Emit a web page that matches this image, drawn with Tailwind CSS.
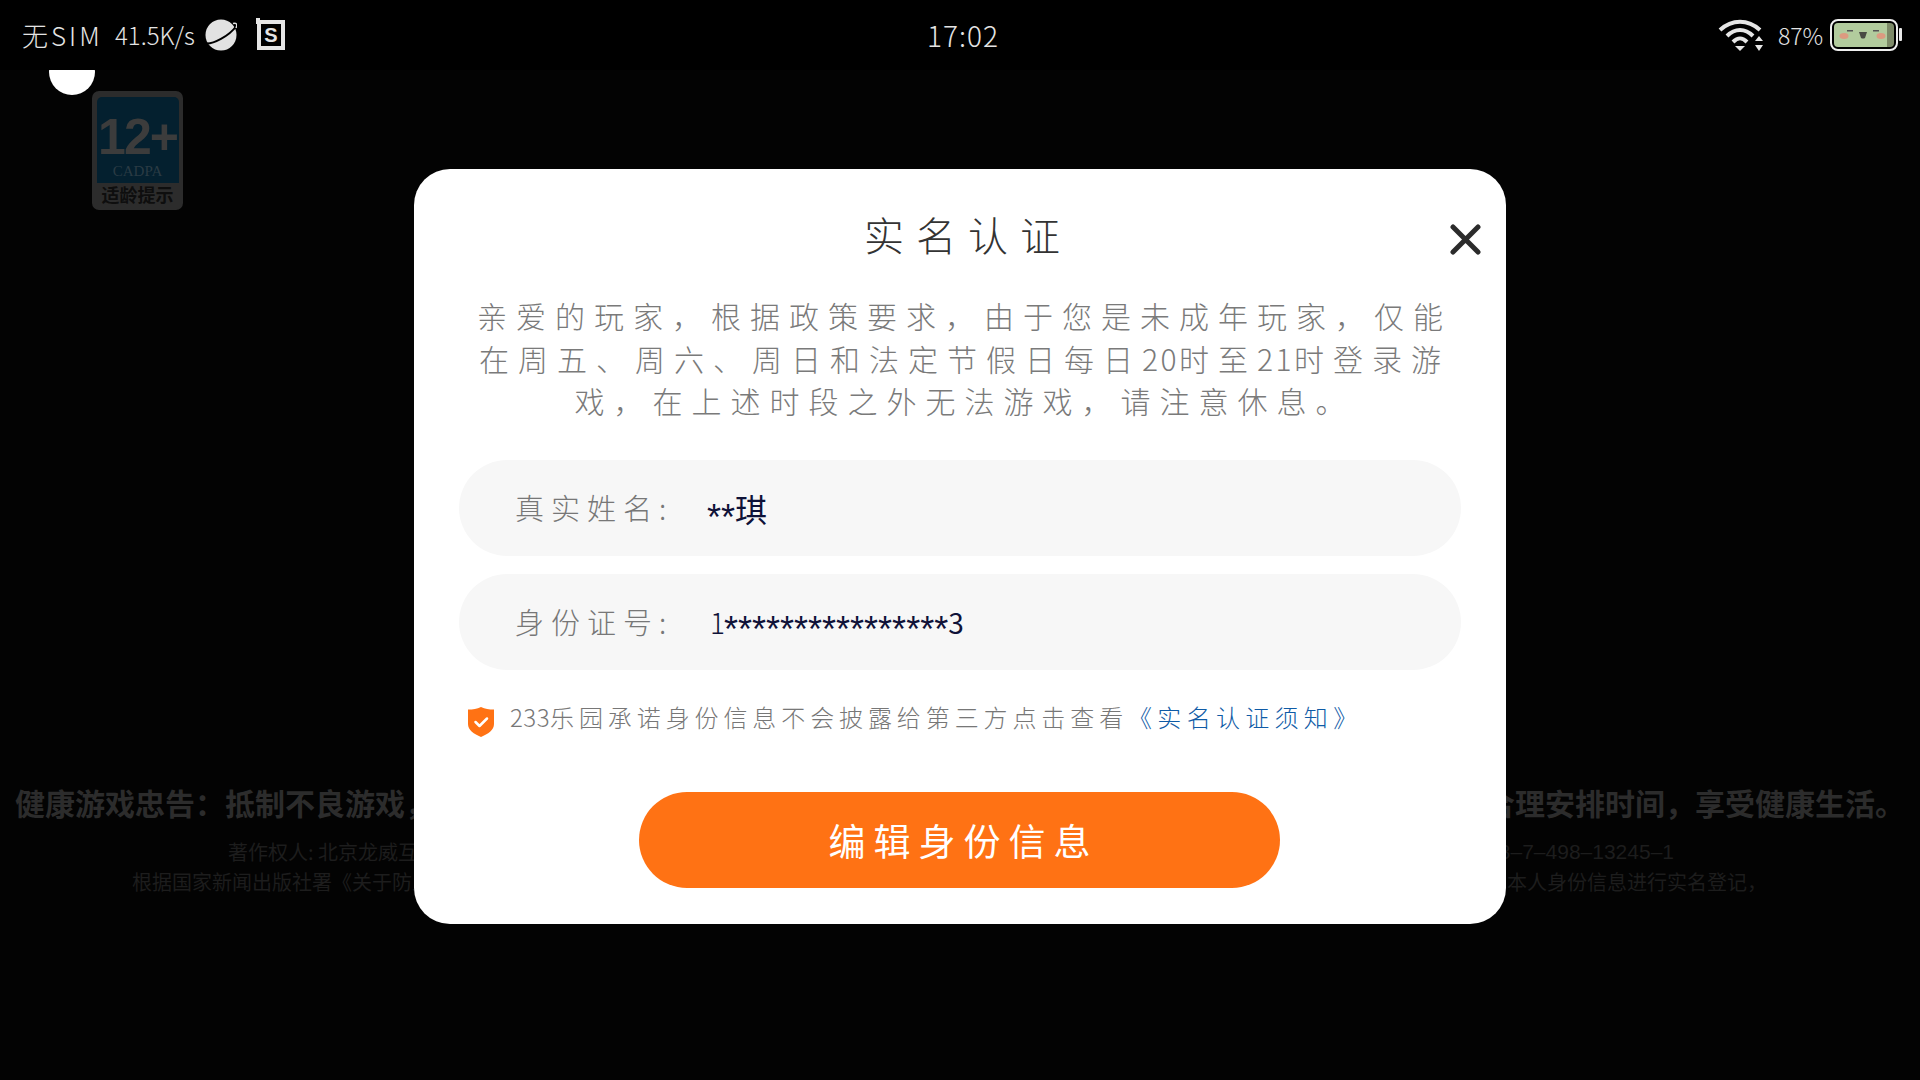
<!DOCTYPE html>
<html lang="zh-CN">
<head>
<meta charset="utf-8">
<script src="https://cdn.jsdelivr.net/npm/@tailwindcss/browser@4"></script>
<title>实名认证</title>
</head>
<body class="m-0 bg-black">
<div class="relative w-[1920px] h-[1080px] overflow-hidden bg-[#030303] font-['Noto_Sans_CJK_SC','Noto_Sans',sans-serif] font-light">

  <!-- back page decorations -->
  <div class="absolute left-[49px] top-[49px] w-[46px] h-[46px] rounded-full bg-white"></div>
  <div class="absolute left-[92px] top-[91px] w-[91px] h-[119px] rounded-[7px] bg-[#2c2c2c] flex flex-col items-center pt-[6px]">
    <div class="w-[82px] h-[86px] rounded-t-[5px] bg-[#04202f] flex flex-col items-center">
      <div class="font-['Liberation_Sans',sans-serif] font-bold text-[50px] leading-[50px] mt-[15px] text-[#3c3c3c] tracking-[-2px]">12+</div>
      <div class="font-['Liberation_Serif',serif] font-normal text-[15px] leading-[15px] text-[#2a3b44] mt-[2px]">CADPA</div>
    </div>
    <div class="text-[18px] leading-[22px] font-bold text-[#0e0e0e] whitespace-nowrap">适龄提示</div>
  </div>

  <!-- status bar -->
  <div class="relative h-[70px] bg-black flex items-center text-[#e4e4e4]">
    <div class="ml-[22px] flex items-center w-[183px] whitespace-nowrap">
      <span class="text-[26px] leading-[30px] w-[93px] tracking-[3px] font-extralight">无SIM</span>
      <span class="text-[24px] leading-[30px] font-extralight">41.5K/s</span>
    </div>
    <svg class="block shrink-0" width="32" height="32" viewBox="0 0 32 32">
      <circle cx="16" cy="16" r="15.500" fill="#e2e2e2"/>
      <path d="M0.500 24.500C8 25.500 24 17 31 7.500" fill="none" stroke="#000" stroke-width="2"/>
      <path d="M28 4.500C31 3.500 33 5 31 9" fill="none" stroke="#e2e2e2" stroke-width="1.500"/>
    </svg>
    <div class="relative ml-[20px] w-[28px] h-[30px] border-[4px] border-[#e6e6e6] flex items-center justify-center shrink-0">
      <span class="absolute left-[-5px] top-[-6px] w-[4px] h-[6px] bg-[#e6e6e6]"></span>
      <span class="font-['Liberation_Sans',sans-serif] font-bold text-[20px] leading-[20px]">S</span>
    </div>
    <div class="absolute left-[927px] top-[18px] text-[28px] leading-[34px] tracking-[1px] font-extralight whitespace-nowrap">17:02</div>
    <div class="ml-auto flex items-center mr-[18px]">
      <svg class="block" width="48" height="34" viewBox="0 0 48 34">
        <path d="M3 12C15 1 31 1 43 12" fill="none" stroke="#e6e6e6" stroke-width="4"/>
        <path d="M10 18C18 10 28 10 36 18" fill="none" stroke="#e6e6e6" stroke-width="4"/>
        <path d="M16 24C21 19 25 19 30 24" fill="none" stroke="#e6e6e6" stroke-width="4"/>
        <path d="M18 28H28L23 33Z" fill="#e6e6e6"/>
        <path d="M38 23L42 18L46 23ZM38 27H46L42 33Z" fill="#e6e6e6"/>
      </svg>
      <span class="ml-[13px] w-[52px] text-[23px] leading-[34px] font-extralight whitespace-nowrap">87%</span>
      <svg class="block" width="72" height="32" viewBox="0 0 72 32">
        <rect x="1" y="1" width="66" height="30" rx="7" fill="#000" stroke="#efefef" stroke-width="2"/>
        <path d="M8 4H57V28H8A4 4 0 0 1 4 24V8A4 4 0 0 1 8 4Z" fill="#b2cb9d"/>
        <path d="M57 4H60A4 4 0 0 1 64 8V24A4 4 0 0 1 60 28H57Z" fill="#7d8a68"/>
        <ellipse cx="14" cy="17" rx="4.500" ry="3" fill="#dc9a80"/>
        <ellipse cx="51" cy="17" rx="4.500" ry="3" fill="#dc9a80"/>
        <rect x="17" y="11" width="6" height="1.500" fill="#555"/>
        <rect x="43" y="11" width="6" height="1.500" fill="#555"/>
        <path d="M29 13H37L35 19Q33 20 31 19Z" fill="#4a4a44"/>
        <rect x="69" y="9" width="3" height="13" rx="1" fill="#e8e8e8"/>
      </svg>
    </div>
  </div>

  <!-- back page footer -->
  <div class="mt-[712px] flex flex-col items-center font-normal">
    <div class="text-[30px] leading-[40px] font-bold text-[#2c2c2c] whitespace-nowrap">健康游戏忠告：抵制不良游戏，拒绝盗版游戏。注意自我保护，谨防受骗上当。适度游戏益脑，沉迷游戏伤身。合理安排时间，享受健康生活。</div>
    <div class="mt-[15px] ml-[228px] self-start w-[1446px] flex justify-between text-[20px] leading-[30px] text-[#1d1d1d] whitespace-nowrap">
      <span>著作权人: 北京龙威互动</span><span class="font-['Liberation_Sans',sans-serif] text-[21px]">978–7–498–13245–1</span>
    </div>
    <div class="ml-[132px] self-start w-[1635px] flex justify-between text-[20px] leading-[30px] text-[#1d1d1d] whitespace-nowrap">
      <span>根据国家新闻出版社署《关于防止未成年人</span><span>本人身份信息进行实名登记，</span>
    </div>
  </div>

  <!-- dialog -->
  <div class="absolute left-[414px] top-[169px] w-[1092px] h-[755px] rounded-[36px] bg-white flex flex-col">
    <svg class="absolute left-[1036px] top-[55px] block" width="31" height="31" viewBox="0 0 31 31">
      <path d="M3 3L28 28M28 3L3 28" fill="none" stroke="#2b2b2b" stroke-width="5" stroke-linecap="round"/>
    </svg>
    <h1 class="mt-[43px] text-center text-[40px] leading-[44px] tracking-[12px] pl-[16px] text-[#333] font-light">实名认证</h1>
    <p class="mt-[38px] pl-[9px] text-center text-[30px] leading-[42.5px] tracking-[9px] text-[#7a7a7a] font-light whitespace-nowrap">亲爱的玩家，根据政策要求，由于您是未成年玩家，仅能<br>在周五、周六、周日和法定节假日每日<span class="tracking-[2.5px]">20</span>时至<span class="tracking-[2.5px]">21</span>时登录游<br>戏，在上述时段之外无法游戏，请注意休息。</p>
    <div class="mt-[38.5px] ml-[45px] w-[1002px] h-[96px] rounded-full bg-[#f7f7f7] flex items-center pl-[56px] whitespace-nowrap">
      <span class="w-[192px] text-[29px] tracking-[7px] text-[#777]">真实姓名:</span>
      <span class="text-[32px] leading-[40px] text-[#0f1238] font-normal"><span class="inline-block translate-y-[8px] font-['Liberation_Sans',sans-serif] text-[36px] leading-[34px]">**</span>琪</span>
    </div>
    <div class="mt-[18px] ml-[45px] w-[1002px] h-[96px] rounded-full bg-[#f7f7f7] flex items-center pl-[56px] whitespace-nowrap">
      <span class="w-[192px] text-[29px] tracking-[7px] text-[#777]">身份证号:</span>
      <span class="text-[28px] leading-[40px] text-[#0f1238] font-normal flex items-center pl-[3px]"><span class="w-[14px] font-extralight">1</span><span class="inline-block translate-y-[8px] font-['Liberation_Sans',sans-serif] text-[36px] leading-[34px]">****************</span><span>3</span></span>
    </div>
    <div class="mt-[37px] ml-[54px] h-[30px] flex items-center whitespace-nowrap">
      <svg class="block shrink-0" width="26" height="30" viewBox="0 0 26 30">
        <path d="M13 0C17 2 21 2.500 26 2.500V17C26 23 20 27 13 30C6 27 0 23 0 17V2.500C5 2.500 9 2 13 0Z" fill="#ff7214"/>
        <path d="M7.500 15L11.500 19L19 11.500" fill="none" stroke="#fff" stroke-width="2.500" stroke-linecap="round" stroke-linejoin="round"/>
      </svg>
      <span class="ml-[16px] text-[24px] leading-[30px] tracking-[4.9px] text-[#777] -translate-y-[5px]"><span class="tracking-[0.5px]">233</span>乐园承诺身份信息不会披露给第三方点击查看<span class="text-[#0f5ba6] tracking-[5.3px]">《实名认证须知》</span></span>
    </div>
    <div class="mt-[55px] ml-[225px] w-[641px] h-[96px] rounded-full bg-[#ff7214] flex items-center justify-center pl-[8px] text-white text-[37px] leading-[44px] tracking-[8px] font-normal">编辑身份信息</div>
  </div>
</div>
</body>
</html>
